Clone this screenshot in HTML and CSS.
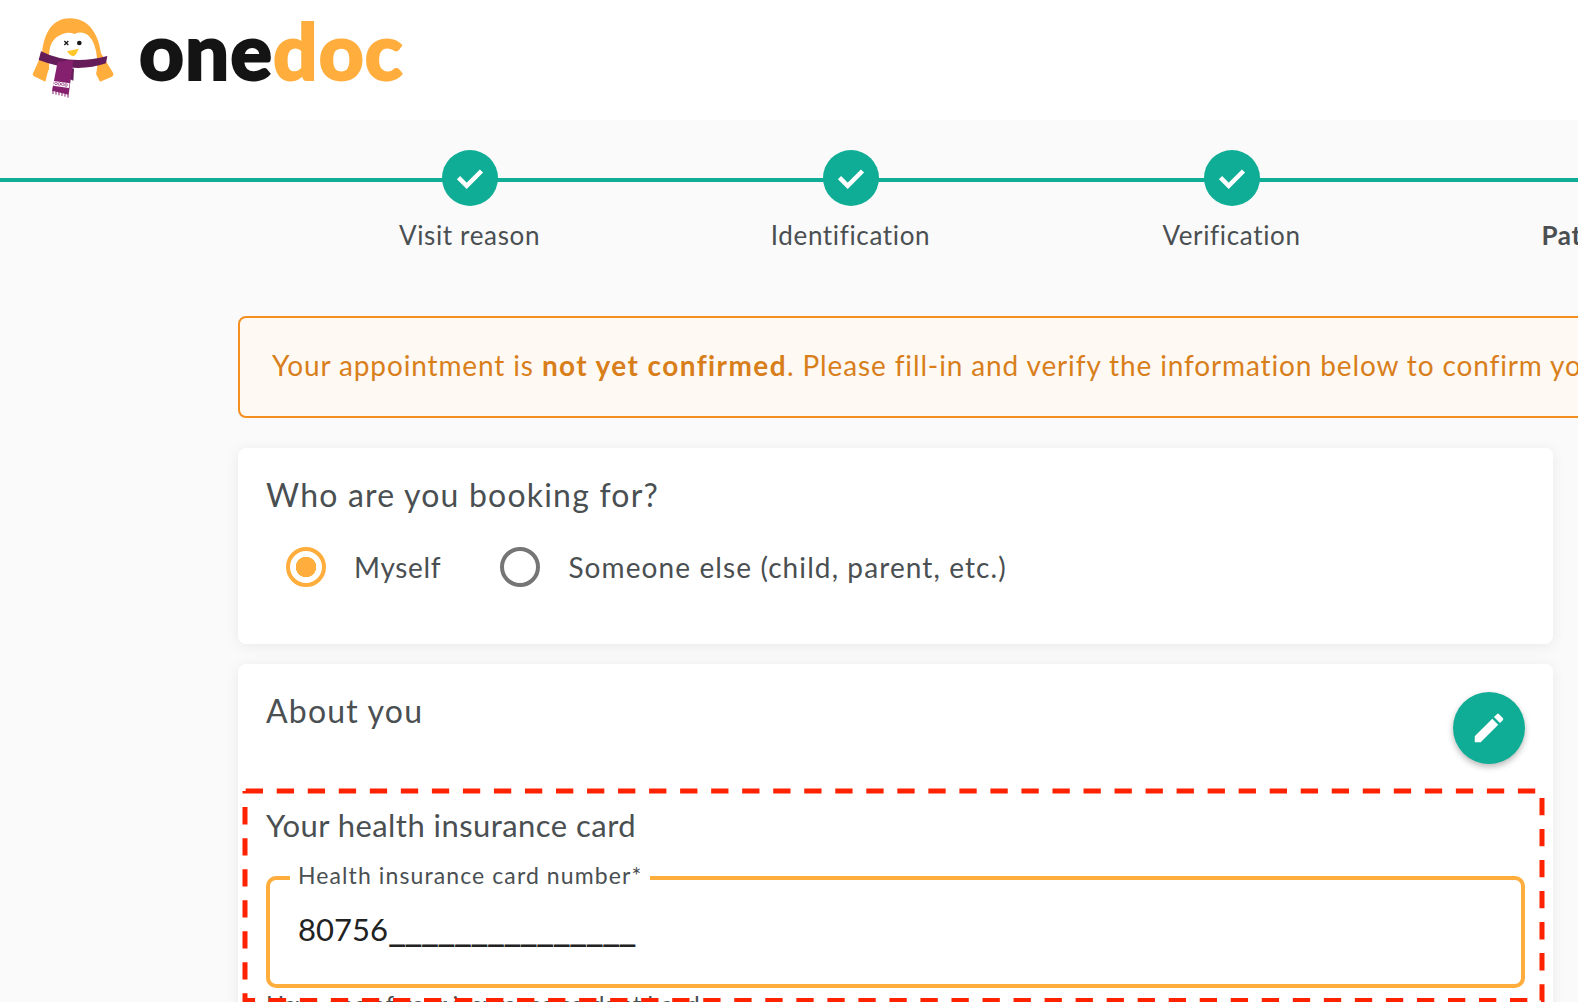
FILE: index.html
```html
<!DOCTYPE html>
<html lang="en">
<head>
<meta charset="utf-8">
<title>OneDoc</title>
<link rel="stylesheet" href="styles.css">
</head>
<body>
<header class="topbar">
  <svg class="penguin" viewBox="0 0 330 285" aria-hidden="true">
    <path fill="#ffae3d" d="M66 130C72 65 100 25 150 25C205 25 235 70 243 130L279 188Q283 197 274 201L240 215L222 180H85L76 215L42 199Q35 194 41 186Z"/>
    <path fill="#fff" d="M88 150C84 105 100 82 128 72Q148 64 163 72Q195 58 215 88Q232 115 232 170L222 230H85Z"/>
    <path fill="#651d5a" d="M63 124Q150 168 262 138L258 160Q165 192 56 150Z"/>
    <path fill="#651d5a" d="M148 172L162 176L160 212L150 208Z"/>
    <path fill="#85206f" d="M113 155L160 150L146 254L96 242Z"/>
    <path fill="#fff" d="M102 213L149 220L147 234L99 227Z"/>
    <g fill="none" stroke="#85206f" stroke-width="2">
      <circle cx="108" cy="220" r="4"/><circle cx="118" cy="222" r="4"/><circle cx="128" cy="223" r="4"/><circle cx="138" cy="225" r="4"/>
    </g>
    <path stroke="#85206f" stroke-width="3" d="M99 242V252M108 244V254M117 246V256M126 248V258M135 250V260M144 252V263"/>
    <path fill="#ffc72c" d="M141 124Q158 120 176 116Q170 134 160 139Q150 138 141 124Z"/>
    <circle cx="178" cy="99" r="7" fill="#1a1a1a"/>
    <path stroke="#1a1a1a" stroke-width="4" d="M133 93L145 105M145 93L133 105"/>
  </svg>
  <span class="wordmark">one<span class="wordmark-accent">doc</span></span>
</header>

<nav class="stepper">
  <div class="step">
    <span class="step-dot"><svg viewBox="0 0 56 56"><path d="M16.5 27.6L24.7 35.8L39.5 21"/></svg></span>
    <span class="step-label">Visit reason</span>
  </div>
  <div class="step">
    <span class="step-dot"><svg viewBox="0 0 56 56"><path d="M16.5 27.6L24.7 35.8L39.5 21"/></svg></span>
    <span class="step-label">Identification</span>
  </div>
  <div class="step">
    <span class="step-dot"><svg viewBox="0 0 56 56"><path d="M16.5 27.6L24.7 35.8L39.5 21"/></svg></span>
    <span class="step-label">Verification</span>
  </div>
  <div class="step">
    <span class="step-dot"><svg viewBox="0 0 56 56"><path d="M16.5 27.6L24.7 35.8L39.5 21"/></svg></span>
    <span class="step-label step-label-current">Patient info</span>
  </div>
</nav>

<main class="content">
  <p class="alert">Your appointment is <strong>not yet confirmed</strong>. Please fill-in and verify the information below to confirm your appointment.</p>

  <section class="card card-booking">
    <h2 class="card-title">Who are you booking for?</h2>
    <div class="radios">
      <label class="radio"><span class="radio-mark radio-mark-on"></span>Myself</label>
      <label class="radio radio-long"><span class="radio-mark"></span>Someone else (child, parent, etc.)</label>
    </div>
  </section>

  <section class="card card-about">
    <h2 class="card-title">About you</h2>
    <button class="fab" type="button" aria-label="Edit">
      <svg viewBox="0 0 24 24"><path d="M3 17.25V21h3.75L17.81 9.94l-3.75-3.75L3 17.25zM20.71 7.04c.39-.39.39-1.02 0-1.41l-2.34-2.34c-.39-.39-1.02-.39-1.41 0l-1.83 1.83 3.75 3.75 1.83-1.83z"/></svg>
    </button>
    <h3 class="card-subtitle">Your health insurance card</h3>
    <fieldset class="field">
      <legend class="field-label">Health insurance card number*</legend>
      <div class="field-value">80756<span class="field-mask">_______________</span></div>
    </fieldset>
    <p class="field-help">Have one of your insurance cards at hand</p>
  </section>
</main>

<svg class="highlight" width="1578" height="1002" aria-hidden="true">
  <rect x="245" y="791" width="1297" height="209.5"/>
</svg>
</body>
</html>
```
FILE: styles.css
```css
* { box-sizing: border-box; }
html, body { margin: 0; height: 1002px; overflow: hidden; }
body {
  position: relative;
  background: #fafafa;
  color: #4a4f52;
  font-family: "Lato", "Liberation Sans", sans-serif;
}

.topbar {
  display: flex;
  align-items: center;
  height: 120px;
  padding-left: 20px;
  background: #fff;
}
.penguin { width: 110px; height: 95px; margin-top: -5px; flex: none; }
.wordmark {
  margin-left: 9px;
  margin-top: -20px;
  color: #141414;
  font-size: 78px;
  font-weight: 900;
  line-height: 1;
  letter-spacing: 1px;
  -webkit-text-stroke: 2px currentColor;
}
.wordmark-accent { color: #ffae3d; }

.stepper {
  position: relative;
  display: flex;
  width: 1578px;
  padding: 30px 0 0 279px;
  height: 196px;
}
.stepper::before {
  content: "";
  position: absolute;
  left: 0;
  right: 0;
  top: 58px;
  height: 4px;
  background: #10ad96;
}
.step {
  position: relative;
  flex: 0 0 381px;
  display: flex;
  flex-direction: column;
  align-items: center;
}
.step-dot {
  width: 56px;
  height: 56px;
  border-radius: 50%;
  background: #10ad96;
}
.step-dot svg { display: block; width: 56px; height: 56px; fill: none; stroke: #fff; stroke-width: 4.5; }
.step-label {
  margin-top: 12px;
  font-size: 26px;
  line-height: 34px;
  letter-spacing: .65px;
  white-space: nowrap;
}
.step-label-current { font-weight: 700; }

.content { padding-left: 238px; }
.alert {
  width: 1700px;
  height: 102px;
  margin: 0 0 30px;
  padding: 0 32px 4px;
  display: flex;
  align-items: center;
  white-space: pre;
  background: #fff9f3;
  border: 2px solid #f39020;
  border-radius: 8px;
  color: #d87f1c;
  font-size: 28px;
  letter-spacing: .87px;
}
.alert strong { font-weight: 700; letter-spacing: 1.4px; }

.card {
  position: relative;
  width: 1315px;
  margin-bottom: 20px;
  padding: 0 28px;
  background: #fff;
  border-radius: 8px;
  box-shadow: 0 2px 14px rgba(0, 0, 0, .07);
}
.card-booking { height: 196px; padding-top: 26px; }
.card-about { padding-top: 26px; height: 400px; }
.card-title, .card-subtitle {
  margin: 0;
  font-weight: 400;
  line-height: 42px;
}
.card-title { font-size: 32px; letter-spacing: 1.2px; }
.card-subtitle { margin-top: 72px; font-size: 31px; letter-spacing: .45px; }

.radios { display: flex; gap: 59px; margin: 31px 0 0 20px; }
.radio { display: flex; align-items: center; gap: 28px; font-size: 28px; letter-spacing: .7px; line-height: 40px; }
.radio-long { letter-spacing: 1.1px; }
.radio-mark { width: 40px; height: 40px; flex: none; border: 4px solid #757575; border-radius: 50%; }
.radio-mark-on { border-color: #ffae3d; background: radial-gradient(circle, #ffae3d 10px, #fff 10.5px); }

.fab {
  position: absolute;
  top: 28px;
  right: 28px;
  width: 72px;
  height: 72px;
  padding: 17px;
  border: 0;
  border-radius: 50%;
  background: #10ad96;
  box-shadow: 0 3px 6px rgba(0, 0, 0, .28);
}
.fab svg { display: block; width: 38px; height: 38px; fill: #fff; }

.field {
  width: 1259px;
  height: 127px;
  margin: 15px 0 0;
  padding: 0 28px;
  border: 4px solid #ffae3d;
  border-radius: 10px;
}
.field-label {
  margin-left: -8px;
  padding: 0 8px 6px;
  font-size: 23px;
  line-height: 28px;
  letter-spacing: 1.1px;
}
.field-value {
  margin-top: 14px;
  color: #222;
  font-size: 31px;
  line-height: 40px;
}
.field-mask { font-size: 40px; line-height: 30px; letter-spacing: -1.9px; }
.field-help { margin: 1px 0 0; font-size: 24px; line-height: 30px; }

.highlight { position: absolute; left: 0; top: 0; pointer-events: none; }
.highlight rect { fill: none; stroke: #ff2200; stroke-width: 5; stroke-dasharray: 17.3 13.73; stroke-dashoffset: -.7; }
```
